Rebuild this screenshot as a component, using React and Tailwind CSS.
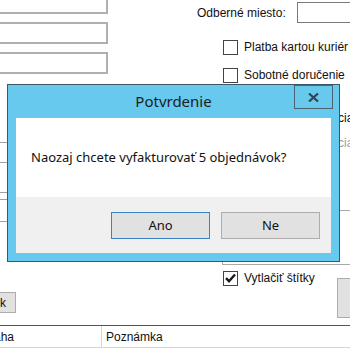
import React from 'react'

function Field({ className = '' }) {
  return <div className={`h-[22px] border-2 border-[#b0b0b0] bg-white ${className}`} />
}

function Check({ checked, label, className = '' }) {
  return (
    <div className={`flex items-center gap-[6px] whitespace-nowrap shrink-0 ${className}`}>
      <div className="w-[15px] h-[15px] shrink-0 border border-[#444] bg-white flex items-center justify-center">
        {checked && (
          <svg width="11" height="10" viewBox="0 0 11 10">
            <path d="M1 5.2 L4 8.2 L10 1.5" fill="none" stroke="#1a1a1a" strokeWidth="2.4" />
          </svg>
        )}
      </div>
      <span>{label}</span>
    </div>
  )
}

export default function App() {
  return (
    <div className="relative w-[350px] h-[350px] overflow-hidden bg-white text-[12px] text-[#111] font-['Liberation_Sans',Arial,sans-serif]">
      {/* top of the form */}
      <div className="flex h-[84px]">
        <div className="-ml-[12px] -mt-[8px] w-[120px] shrink-0 flex flex-col gap-[8px]">
          <Field />
          <Field />
          <Field />
        </div>
        <div className="flex-1 flex flex-col">
          <div className="flex items-center mt-[2px] h-[21px] whitespace-nowrap">
            <span className="ml-[89px] shrink-0">Odberné miesto:</span>
            <div className="ml-[11px] w-[60px] h-[21px] shrink-0 border border-[#7a7a7a]" />
          </div>
          <Check label="Platba kartou kuriér" className="ml-[115px] mt-[15px]" />
          <Check label="Sobotné doručenie" className="ml-[115px] mt-[10px]" />
        </div>
      </div>

      {/* middle, mostly under the dialog */}
      <div className="flex flex-col">
        <div className="h-[126px] flex justify-between items-start">
          <div className="w-[8px] mt-[58px] flex flex-col">
            <div className="h-[21px] border-y border-[#a0a0a0]" />
            <div className="h-[30px] border-b border-[#a0a0a0]" />
            <div className="h-[7px] border-b border-[#a0a0a0]" />
            <div className="h-[22px] border-b border-[#a0a0a0]" />
          </div>
          <div className="w-[12px] flex flex-col leading-[14px] mt-[27px] whitespace-nowrap">
            <span>cia</span>
            <span className="mt-[11px] text-[#a0a0a0]">cia</span>
          </div>
        </div>
        <div className="ml-[222px] -mr-[10px] h-[55px] border border-[#a8a8a8]" />
      </div>

      {/* bottom of the form */}
      <div className="flex h-[60px] items-start">
        <div className="-ml-[30px] mt-[27px] w-[46px] h-[21px] shrink-0 border border-[#adadad] bg-[#e1e1e1] flex items-center justify-end pr-[9px]">k</div>
        <Check checked label="Vytlačiť štítky" className="ml-[207px] mt-[5px] h-[16px]" />
        <div className="ml-auto -mr-[27px] mt-[13px] w-[40px] h-[40px] shrink-0 border border-[#adadad] bg-[#e1e1e1]" />
      </div>
      <div className="flex h-[23px] border-t border-[#555] border-b border-b-[#d6d6d6] items-center bg-white whitespace-nowrap">
        <div className="w-[108px] h-full shrink-0 border-r border-[#d6d6d6] flex items-center -ml-[6px]">áha</div>
        <div className="pl-[4px]">Poznámka</div>
      </div>

      {/* dialog */}
      <div className="absolute left-[7px] top-[84px] w-[333px] h-[178px] border border-[#3e5666] bg-[#68c9ee] flex flex-col px-[8px] pb-[8px] font-['Noto_Sans',sans-serif]">
        <div className="h-[33px] flex items-center justify-center text-[15px] text-[#1c1c1c]">Potvrdenie</div>
        <div className="flex-1 flex flex-col bg-white">
          <div className="h-[79px] flex items-center pl-[15px] text-[13px] text-[#111] pt-[1px] whitespace-nowrap">
            Naozaj chcete vyfakturovať 5 objednávok?
          </div>
          <div className="flex-1 bg-[#f0f0f0] flex justify-end gap-[11px] pr-[11px] pt-[15px] text-[13px]">
            <div className="w-[99px] h-[27px] border border-[#3b82c4] bg-[#e1e1e1] flex items-center justify-center">Ano</div>
            <div className="w-[99px] h-[27px] border border-[#adadad] bg-[#e1e1e1] flex items-center justify-center">Ne</div>
          </div>
        </div>
        <div className="absolute right-[6px] top-0 w-[39px] h-[24px] border border-[#4b6270] flex items-center justify-center">
          <svg width="11" height="9" viewBox="0 0 11 9">
            <path d="M1 0.5 L10 8.5 M10 0.5 L1 8.5" stroke="#33444f" strokeWidth="2.2" />
          </svg>
        </div>
      </div>
    </div>
  )
}
